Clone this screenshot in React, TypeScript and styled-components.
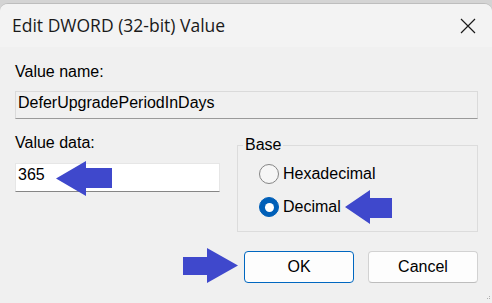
import React from 'react';
import styled, { createGlobalStyle } from 'styled-components';

const GlobalStyle = createGlobalStyle`
  * { box-sizing: border-box; }
  html, body {
    margin: 0;
    padding: 0;
    background: #d4d4d4;
  }
`;

const Screen = styled.div`
  position: relative;
  width: 492px;
  height: 303px;
  overflow: hidden;
  background: #d4d4d4;
`;

const Dialog = styled.div`
  margin-top: 3px;
  width: 492px;
  height: 300px;
  background: #f0f0f0;
  border-top: 1px solid #bdbdbd;
  border-radius: 8px 8px 0 0;
  overflow: hidden;
  display: flex;
  flex-direction: column;
`;

const TitleBar = styled.div`
  height: 43px;
  background: #f3f3f3;
  display: flex;
  align-items: center;
  justify-content: space-between;
  padding-left: 12px;
`;

const Title = styled.span`
  font-family: 'Segoe UI', 'Open Sans', sans-serif;
  font-size: 17.5px;
  color: #1a1a1a;
  margin-top: -1px;
`;

const CloseButton = styled.div`
  width: 48px;
  height: 43px;
  display: flex;
  align-items: center;
  justify-content: center;
`;

const Content = styled.div`
  padding: 16px 14px 0 15px;
  font-family: 'Liberation Sans', Arial, sans-serif;
  font-size: 16px;
  line-height: 18px;
  color: #000;
`;

const Label = styled.div`
  height: 18px;
`;

const Field = styled.div<{ $readOnly?: boolean; $h: number }>`
  margin-top: ${({ $readOnly }) => ($readOnly ? 10 : 11)}px;
  height: ${({ $h }) => $h}px;
  background: ${({ $readOnly }) => ($readOnly ? '#f0f0f0' : '#ffffff')};
  border: 1px solid ${({ $readOnly }) => ($readOnly ? '#dadada' : '#e6e6e6')};
  border-bottom-color: ${({ $readOnly }) => ($readOnly ? '#9a9a9a' : '#868686')};
  padding: 2px 2px 0 2px;
`;

const Row = styled.div`
  display: grid;
  grid-template-columns: 205px 241px;
  column-gap: 17px;
  margin-top: 15px;
`;

const Column = styled.div`
  display: flex;
  flex-direction: column;
`;

const GroupBox = styled.fieldset`
  margin: 2px 0 0 0;
  padding: 0;
  height: 96px;
  border: 1px solid #dcdcdc;
  min-width: 0;
`;

const Legend = styled.legend`
  margin-left: 5px;
  padding: 0 2px;
  line-height: 18px;
`;

const GroupInner = styled.div`
  padding: 8px 0 0 21px;
  display: flex;
  flex-direction: column;
  gap: 9px;
`;

const RadioRow = styled.div`
  height: 24px;
  display: flex;
  align-items: center;
  gap: 4px;
`;

const RadioCircle = styled.span<{ $checked?: boolean }>`
  width: 20px;
  height: 20px;
  border-radius: 50%;
  flex-shrink: 0;
  display: flex;
  align-items: center;
  justify-content: center;
  background: ${({ $checked }) => ($checked ? '#005fb8' : '#f6f6f6')};
  border: 1px solid ${({ $checked }) => ($checked ? '#005fb8' : '#858585')};

  &::after {
    content: '';
    display: ${({ $checked }) => ($checked ? 'block' : 'none')};
    width: 9px;
    height: 9px;
    border-radius: 50%;
    background: #ffffff;
  }
`;

const ButtonRow = styled.div`
  display: flex;
  justify-content: flex-end;
  gap: 14px;
  margin-top: 19px;
`;

const Button = styled.div<{ $default?: boolean }>`
  width: 110px;
  height: 32px;
  display: flex;
  align-items: center;
  justify-content: center;
  background: #fdfdfd;
  border-radius: 4px;
  border: 1px solid ${({ $default }) => ($default ? '#0067c0' : '#d2d2d2')};
  border-bottom-color: ${({ $default }) => ($default ? '#0067c0' : '#bdbdbd')};
  color: #000;
`;

const ArrowSvg = styled.svg`
  position: absolute;
  display: block;
`;

type ArrowProps = {
  x: number;
  y: number;
  w: number;
  h: number;
  head: number;
  shaft: [number, number];
  dir: 'left' | 'right';
};

// annotation arrows painted over the dialog
const Arrow: React.FC<ArrowProps> = ({ x, y, w, h, head, shaft, dir }) => {
  const [s1, s2] = shaft;
  const mid = h / 2;
  const pts =
    dir === 'left'
      ? [[0, mid], [head, 0], [head, s1], [w, s1], [w, s2], [head, s2], [head, h]]
      : [[w, mid], [w - head, 0], [w - head, s1], [0, s1], [0, s2], [w - head, s2], [w - head, h]];
  return (
    <ArrowSvg style={{ left: x, top: y }} width={w} height={h} viewBox={`0 0 ${w} ${h}`}>
      <polygon points={pts.map((p) => p.join(',')).join(' ')} fill="#3f48cc" />
    </ArrowSvg>
  );
};

const Grip = styled.svg`
  position: absolute;
  right: 1px;
  bottom: 1px;
`;

const App: React.FC = () => {
  return (
    <>
      <GlobalStyle />
      <Screen>
        <Dialog>
          <TitleBar>
            <Title>Edit DWORD (32-bit) Value</Title>
            <CloseButton>
              <svg width="16" height="16" viewBox="0 0 16 16">
                <path d="M1 1L15 15M15 1L1 15" stroke="#1a1a1a" strokeWidth="1.2" />
              </svg>
            </CloseButton>
          </TitleBar>
          <Content>
            <Label>Value name:</Label>
            <Field $readOnly $h={28}>DeferUpgradePeriodInDays</Field>
            <Row>
              <Column>
                <Label>Value data:</Label>
                <Field $h={29}>365</Field>
              </Column>
              <GroupBox>
                <Legend>Base</Legend>
                <GroupInner>
                  <RadioRow>
                    <RadioCircle />
                    <span>Hexadecimal</span>
                  </RadioRow>
                  <RadioRow>
                    <RadioCircle $checked />
                    <span>Decimal</span>
                  </RadioRow>
                </GroupInner>
              </GroupBox>
            </Row>
            <ButtonRow>
              <Button $default>OK</Button>
              <Button>Cancel</Button>
            </ButtonRow>
          </Content>
        </Dialog>
        <Arrow x={56} y={161} w={56} h={35} head={30} shaft={[7, 27]} dir="left" />
        <Arrow x={345} y={190} w={47} h={34} head={25} shaft={[8, 28]} dir="left" />
        <Arrow x={183} y={248} w={55} h={35} head={31} shaft={[9, 27]} dir="right" />
        <Grip width="6" height="6" viewBox="0 0 6 6">
          <rect x="4" y="0" width="1" height="1" fill="#b0b0b0" />
          <rect x="2" y="2" width="1" height="1" fill="#b0b0b0" />
          <rect x="4" y="2" width="1" height="1" fill="#b0b0b0" />
        </Grip>
      </Screen>
    </>
  );
};

export default App;
